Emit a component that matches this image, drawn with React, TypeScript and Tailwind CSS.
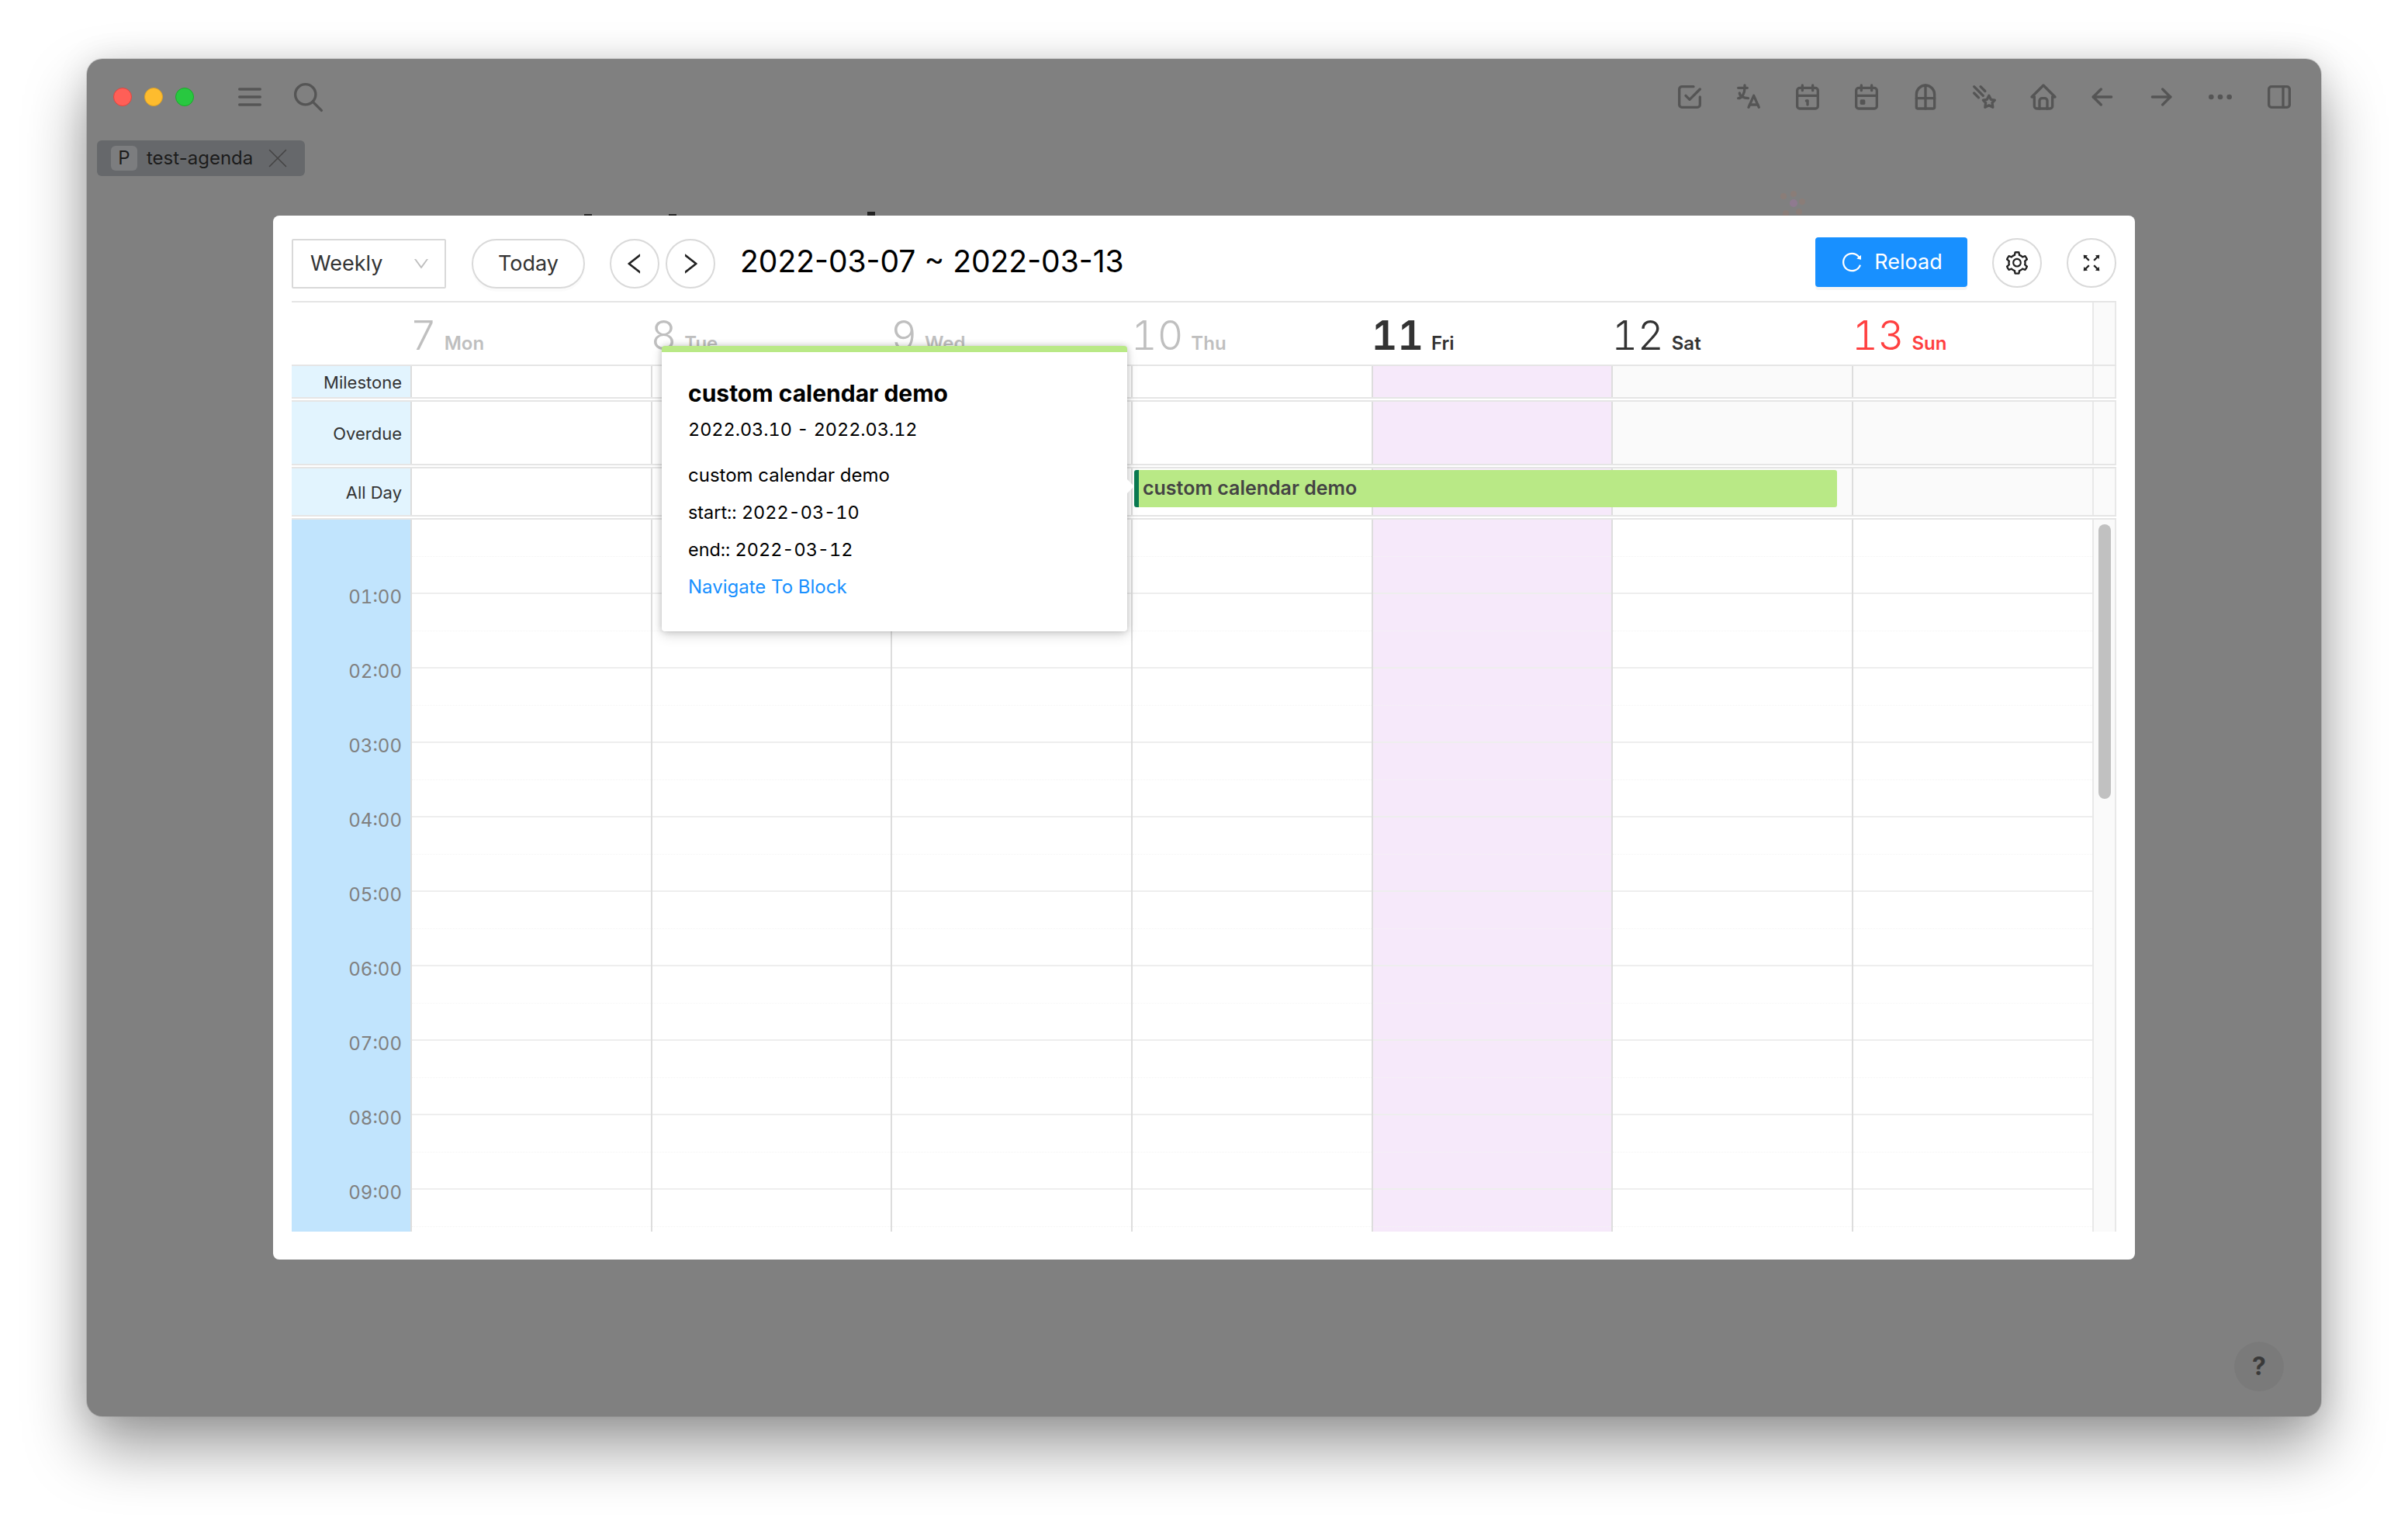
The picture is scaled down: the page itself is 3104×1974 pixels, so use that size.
import React from 'react';
import {
  TbCheckbox,
  TbLanguage,
  TbCalendar,
  TbCalendarEvent,
  TbWindow,
  TbComet,
  TbHome,
  TbArrowLeft,
  TbArrowRight,
  TbDots,
  TbLayoutSidebarRight,
  TbMenu2,
  TbSearch,
  TbX,
} from 'react-icons/tb';
import {
  AiOutlineReload,
  AiOutlineSetting,
  AiOutlineFullscreen,
  AiOutlineDown,
  AiOutlineLeft,
  AiOutlineRight,
} from 'react-icons/ai';

const topIcons = [TbCheckbox, TbLanguage, TbCalendar, TbCalendarEvent, TbWindow, TbComet, TbHome, TbArrowLeft, TbArrowRight, TbDots, TbLayoutSidebarRight];

const days = [
  { num: '7', name: 'Mon', color: 'text-[#bfbfbf]', bold: false },
  { num: '8', name: 'Tue', color: 'text-[#bfbfbf]', bold: false },
  { num: '9', name: 'Wed', color: 'text-[#bfbfbf]', bold: false },
  { num: '10', name: 'Thu', color: 'text-[#bfbfbf]', bold: false },
  { num: '11', name: 'Fri', color: 'text-[#333333]', bold: true },
  { num: '12', name: 'Sat', color: 'text-[#333333]', bold: false },
  { num: '13', name: 'Sun', color: 'text-[#ff4040]', bold: false },
];

const hours = ['01:00', '02:00', '03:00', '04:00', '05:00', '06:00', '07:00', '08:00', '09:00'];

function dayBg(i: number, top: boolean) {
  if (i === 4) return 'bg-[#f6e9fa]';
  if (top && i > 4) return 'bg-[#fafafa]';
  return 'bg-white';
}

// one of the three "all day" style rows above the hour grid
function TopRow({ label, h, first, children }: { label: string; h: string; first?: boolean; children?: React.ReactNode }) {
  return (
    <div className={`relative flex ${h} border-b-2 border-[#e5e5e5] ${first ? '' : 'border-t-2'}`}>
      <div className="flex w-[153px] shrink-0 items-center justify-end bg-[#e2f4fe] pr-[11px] pt-[2px] text-[22px] text-[#333333]">{label}</div>
      {days.map((d, i) => (
        <div key={d.num} className={`w-[309.7px] shrink-0 border-l-2 border-[#dddddd] ${dayBg(i, true)}`} />
      ))}
      <div className="flex-1 border-x-2 border-[#e8e8e8] bg-[#fafafa]" />
      {children}
    </div>
  );
}

export default function App() {
  return (
    <div className="h-[1974px] w-[3104px] overflow-hidden bg-white pl-[112px] pt-[76px] font-['Inter',sans-serif]">
      <div className="relative h-[1750px] w-[2880px] rounded-[20px] bg-[#808080] shadow-[0_40px_80px_rgba(0,0,0,0.4),0_0_40px_rgba(0,0,0,0.1),0_0_0_1px_rgba(0,0,0,0.12)]">
        {/* title bar */}
        <div className="flex h-[98px] items-center pl-[34px] pr-[16px]">
          <div className="flex gap-[16px]">
            <div className="h-[24px] w-[24px] rounded-full border border-[#e0443e] bg-[#ff5f57]" />
            <div className="h-[24px] w-[24px] rounded-full border border-[#dea123] bg-[#febc2e]" />
            <div className="h-[24px] w-[24px] rounded-full border border-[#1aab29] bg-[#28c840]" />
          </div>
          <TbMenu2 className="ml-[52px] text-[#555555]" size={40} />
          <TbSearch className="ml-[33px] text-[#555555]" size={45} strokeWidth={1.8} />
          <div className="ml-auto flex">
            {topIcons.map((Icon, i) => (
              <div key={i} className="flex h-[40px] w-[76px] items-center justify-center text-[#555555]">
                <Icon size={40} />
              </div>
            ))}
          </div>
        </div>

        {/* tab */}
        <div className="ml-[13px] mt-[7px] flex h-[46px] w-[268px] items-center rounded-[6px] bg-[#66686b] pl-[18px] text-[24px] text-[#1c1c1c]">
          <div className="flex h-[32px] w-[34px] items-center justify-center rounded-[6px] bg-[#7c7d7f]">P</div>
          <span className="ml-[12px]">test-agenda</span>
          <TbX className="ml-[11px] text-[#444444]" size={42} strokeWidth={0.9} />
        </div>

        {/* page underneath the dim layer, only its top edge shows */}
        <div className="absolute left-[641px] top-[200px] h-[2px] w-[10px] bg-[#222222]" />
        <div className="absolute left-[750px] top-[200px] h-[2px] w-[10px] bg-[#222222]" />
        <div className="absolute left-[1006px] top-[197px] h-[5px] w-[10px] bg-[#222222]" />
        <div className="absolute left-[2180px] top-[170px] h-[32px] w-[40px] overflow-hidden">
          <div className="absolute left-[15px] top-[11px] h-[10px] w-[10px] rounded-full bg-[#8f7a90]" />
          <div className="absolute left-[3px] top-[3px] h-[8px] w-[8px] rounded-full bg-[#8a7d78]" />
          <div className="absolute left-[16px] top-[0px] h-[8px] w-[8px] rounded-full bg-[#8a7d78]" />
          <div className="absolute left-[27px] top-[10px] h-[8px] w-[8px] rounded-full bg-[#8a7d78]" />
          <div className="absolute left-[6px] top-[25px] h-[8px] w-[8px] rounded-full bg-[#8a7d78]" />
          <div className="absolute left-[23px] top-[23px] h-[8px] w-[8px] rounded-full bg-[#8a7d78]" />
        </div>

        {/* help */}
        <div className="absolute bottom-[32px] right-[48px] flex h-[64px] w-[64px] items-center justify-center rounded-full bg-[#7a7a7a] text-[32px] font-bold text-[#3a3a3a]">?</div>

        {/* calendar modal */}
        <div className="absolute left-[240px] top-[202px] h-[1346px] w-[2400px] rounded-[8px] bg-white px-[24px] pt-[28px]">
          <div className="flex h-[66px] items-end">
            <div className="flex h-[64px] w-[199px] items-center justify-between rounded-[2px] border-2 border-[#d9d9d9] pl-[22px] pr-[18px] text-[27px] text-[#333333]">
              Weekly
              <AiOutlineDown className="text-[#bfbfbf]" size={24} />
            </div>
            <div className="ml-[33px] flex h-[64px] w-[146px] items-center justify-center rounded-full border-2 border-[#d9d9d9] text-[27px] text-[#333333] shadow-[0_4px_0_rgba(0,0,0,0.015)]">Today</div>
            <div className="ml-[32px] flex h-[64px] w-[64px] items-center justify-center rounded-full border-2 border-[#d9d9d9] text-[#222222]">
              <AiOutlineLeft size={34} />
            </div>
            <div className="ml-[8px] flex h-[64px] w-[64px] items-center justify-center rounded-full border-2 border-[#d9d9d9] text-[#222222]">
              <AiOutlineRight size={34} />
            </div>
            <div className="ml-[32px] self-center -mt-[3px] text-[39px] text-black">2022-03-07 ~ 2022-03-13</div>
            <div className="ml-auto flex h-[64px] w-[196px] items-center justify-center gap-[14px] self-start rounded-[4px] bg-[#1890ff] text-[27px] text-white shadow-[0_4px_0_rgba(0,0,0,0.04)]">
              <AiOutlineReload size={30} />
              Reload
            </div>
            <div className="ml-[32px] flex h-[64px] w-[64px] items-center justify-center self-center rounded-full border-2 border-[#d9d9d9] text-[#222222]">
              <AiOutlineSetting size={34} />
            </div>
            <div className="ml-[32px] flex h-[64px] w-[64px] items-center justify-center self-center rounded-full border-2 border-[#d9d9d9] text-[#222222]">
              <AiOutlineFullscreen size={30} />
            </div>
          </div>

          <div className="relative mt-[16px] h-[1200px] overflow-hidden border-t-2 border-[#e5e5e5]">
            {/* day header */}
            <div className="flex h-[82px] border-b-[2px] border-[#e5e5e5]">
              <div className="w-[153px] shrink-0" />
              {days.map((d) => (
                <div key={d.num} className="flex w-[309.7px] shrink-0 items-baseline pt-[12px]">
                  <span className={`text-[52px] leading-[62px] tabular-nums ${d.bold ? 'font-semibold' : 'font-light'} ${d.color}`}>{d.num}</span>
                  <span className={`ml-[10px] text-[24px] font-semibold ${d.color}`}>{d.name}</span>
                </div>
              ))}
              <div className="flex-1 border-x-2 border-[#e8e8e8] bg-[#fafafa]" />
            </div>

            <TopRow label="Milestone" h="h-[42px]" first />
            <div className="h-[2px]" />
            <TopRow label="Overdue" h="h-[84px]" />
            <div className="h-[2px]" />
            <TopRow label="All Day" h="h-[64px]">
              {/* event bar */}
              <div className="absolute left-[1086px] top-[2px] flex h-[48px] w-[906px] items-center rounded-[3px] border-l-[6px] border-[#0a7a51] bg-[#b9e986] pl-[5px] text-[25px] font-semibold text-[#444444]">
                custom calendar demo
              </div>
            </TopRow>
            <div className="h-[2px]" />

            {/* hour grid */}
            <div className="flex h-[922px] border-t-2 border-[#e5e5e5]">
              <div className="w-[153px] shrink-0 bg-[#c1e4fd]">
                <div className="h-[52px]" />
                {hours.map((t) => (
                  <div key={t} className="flex h-[96px] items-center justify-end pr-[11px] text-[24px] tabular-nums text-[#808080]">{t}</div>
                ))}
              </div>
              {days.map((d, i) => (
                <div key={d.num} className={`w-[309.7px] shrink-0 border-l-2 border-[#dddddd] ${dayBg(i, false)}`}>
                  {[...hours, ''].map((t, n) => (
                    <div key={n} className="h-[96px] border-b-2 border-[#eeeeee]">
                      <div className="h-[48px] border-b border-dotted border-[#f4f4f4]" />
                    </div>
                  ))}
                </div>
              ))}
              <div className="relative flex-1 border-x-2 border-[#e8e8e8] bg-[#fafafa]">
                <div className="absolute left-[6px] top-[6px] h-[354px] w-[16px] rounded-full bg-[#c1c1c1]" />
              </div>
            </div>
          </div>

          {/* event popover */}
          <div className="absolute left-[501px] top-[168px] h-[368px] w-[600px] rounded-[4px] border-t-[8px] border-[#b9e986] bg-white px-[34px] pt-[31px] text-[24px] text-black shadow-[0_0_8px_rgba(0,0,0,0.22),0_6px_16px_rgba(0,0,0,0.12)]">
            <div className="text-[30px] font-bold leading-[44px]">custom calendar demo</div>
            <div className="mt-[3px] text-[23.4px] leading-[44px] tabular-nums">2022.03.10 - 2022.03.12</div>
            <div className="mt-[13px] leading-[48px]">custom calendar demo</div>
            <div className="text-[23.4px] leading-[48px] tabular-nums">start:: 2022-03-10</div>
            <div className="text-[23.4px] leading-[48px] tabular-nums">end:: 2022-03-12</div>
            <div className="leading-[48px] text-[#1890ff]">Navigate To Block</div>
            <div className="absolute left-[592px] top-[166px] h-[14px] w-[14px] rotate-45 bg-white" />
          </div>
        </div>
      </div>
    </div>
  );
}
